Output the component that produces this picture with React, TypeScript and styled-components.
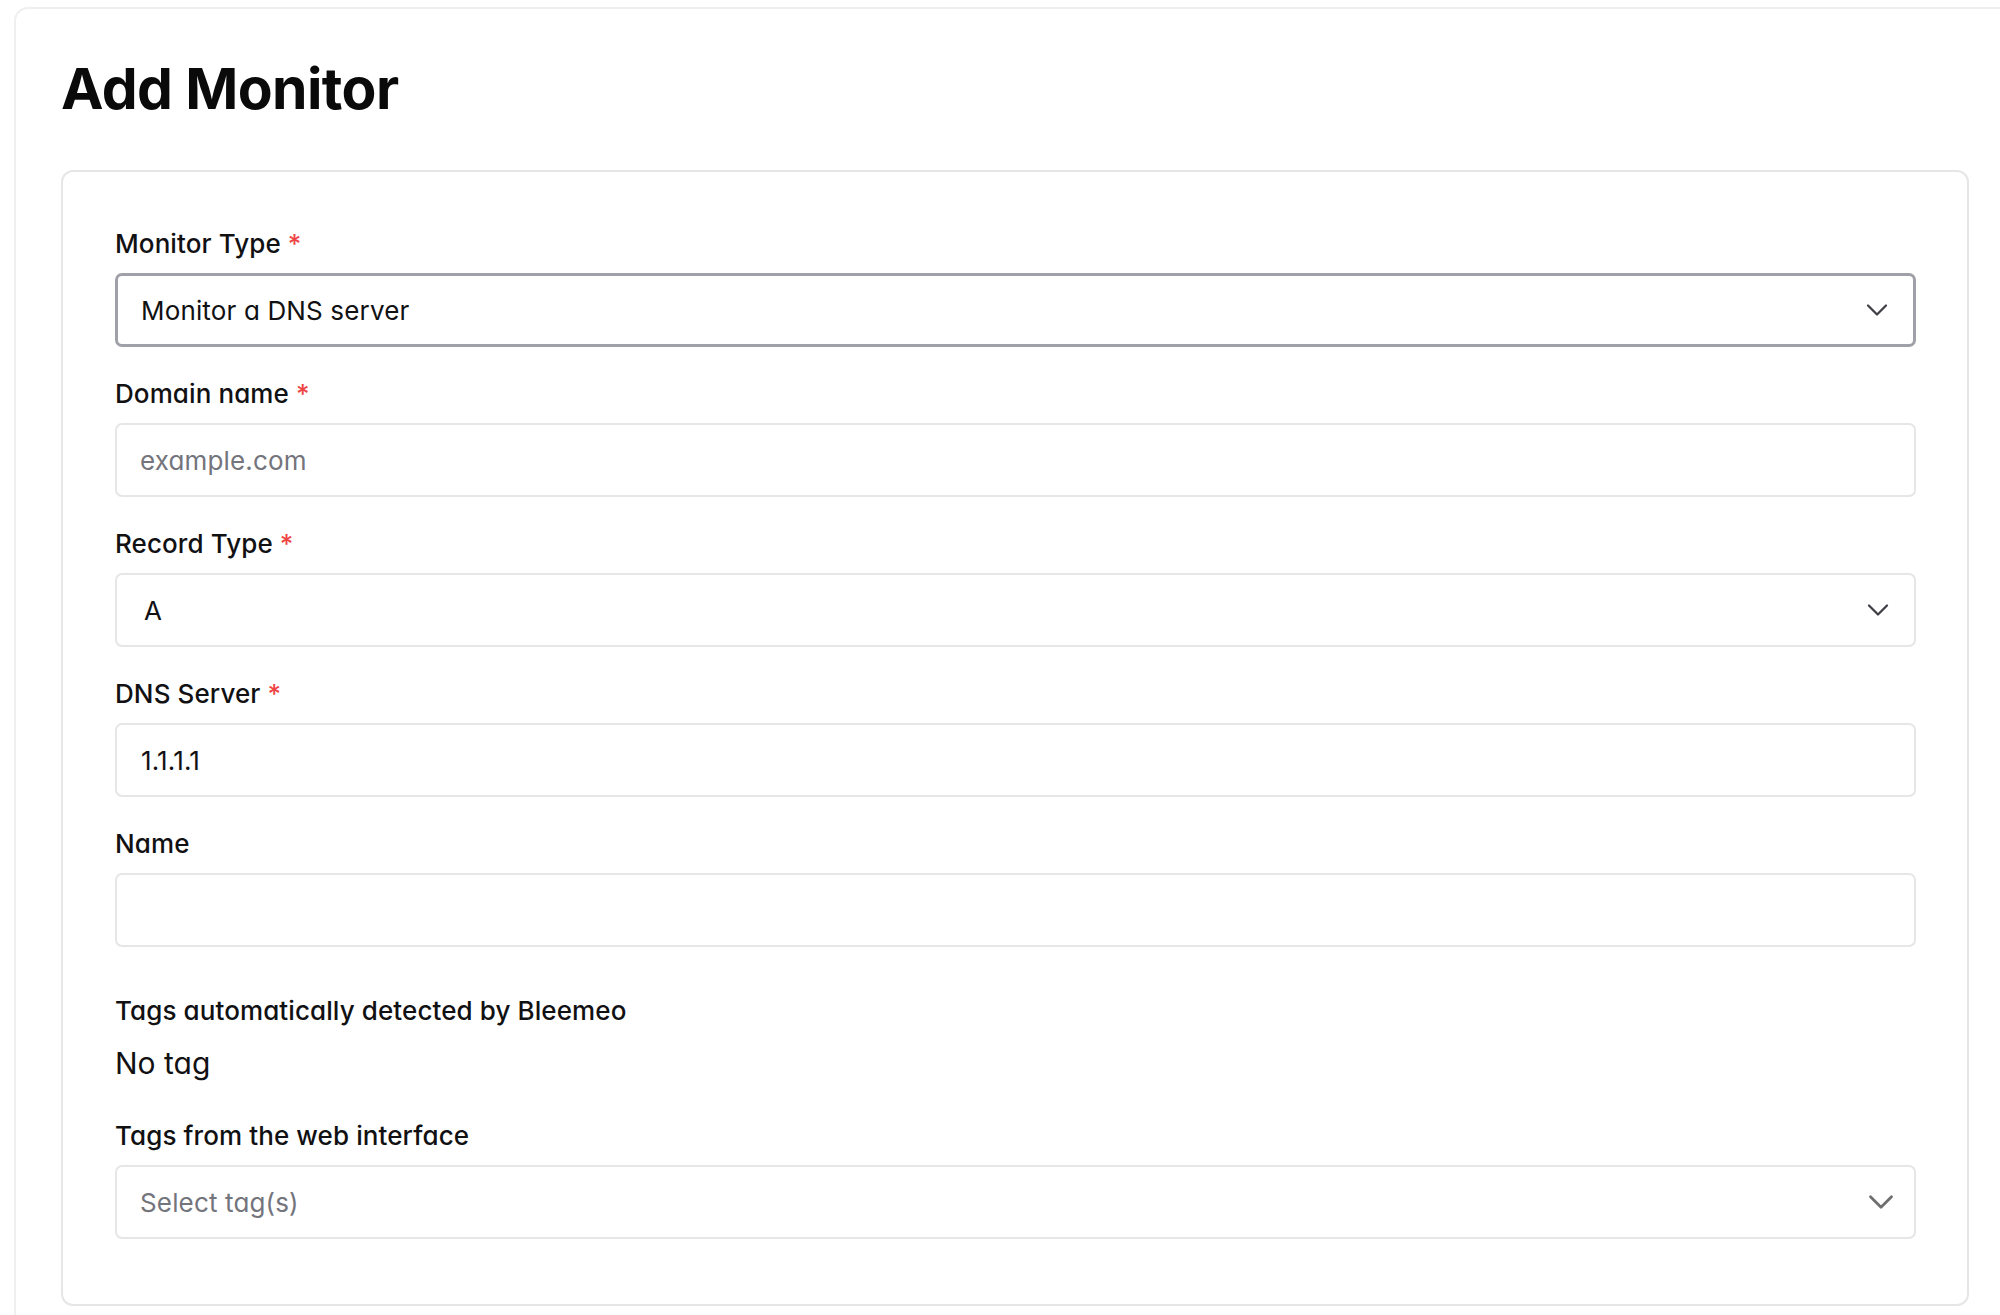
import React from "react";
import styled, { createGlobalStyle } from "styled-components";

const GlobalStyle = createGlobalStyle`
  html, body {
    margin: 0;
    padding: 0;
    background: #ffffff;
  }
  body {
    font-family: Inter, "Noto Sans", "Liberation Sans", sans-serif;
    font-feature-settings: "cv11" 1;
    color: #111113;
    overflow: hidden;
  }
`;

const Page = styled.div`
  padding: 7px 0 0 14px;
  height: 1315px;
  box-sizing: border-box;
`;

const Shell = styled.main`
  border: 2px solid #efefef;
  border-right: none;
  border-bottom: none;
  border-top-left-radius: 14px;
  padding: 30px 0 0 45px;
  height: 100%;
  box-sizing: border-box;
`;

const Title = styled.h1`
  margin: 0 0 31px;
  font-size: 57px;
  line-height: 100px;
  font-weight: 700;
  letter-spacing: -0.6px;
  color: #0a0a0a;
`;

const Card = styled.section`
  width: 1908px;
  box-sizing: border-box;
  border: 2px solid #e6e6e6;
  border-radius: 12px;
  padding: 54px 51px 65px 52px;
`;

const Field = styled.div<{ $last?: boolean }>`
  margin-bottom: ${(p) => (p.$last ? "0" : "29px")};
`;

const Label = styled.label`
  display: block;
  font-size: 26px;
  line-height: 36px;
  font-weight: 500;
  letter-spacing: 0.1px;
  color: #111113;
  margin-bottom: 11px;
`;

const Required = styled.span`
  color: #ef4444;
  margin-left: 7px;
`;

const Control = styled.div<{ $focused?: boolean; $muted?: boolean; $edge?: number }>`
  height: 74px;
  box-sizing: border-box;
  display: flex;
  align-items: center;
  justify-content: space-between;
  border: ${(p) => (p.$focused ? "3px solid #a0a0a8" : "2px solid #e6e6e6")};
  border-radius: 7px;
  padding: 0 ${(p) => p.$edge ?? 20}px 0 ${(p) => (p.$focused ? 22 : 23)}px;
  font-size: 26px;
  color: ${(p) => (p.$muted ? "#74747c" : "#111113")};
  background: #fff;
`;

const Value = styled.span<{ $shift?: number }>`
  padding-left: ${(p) => p.$shift ?? 0}px;
  letter-spacing: 0.15px;
`;

const Chevron = styled.svg<{ $light?: boolean }>`
  width: ${(p) => (p.$light ? "42px" : "36px")};
  height: ${(p) => (p.$light ? "42px" : "36px")};
  stroke: ${(p) => (p.$light ? "#6f6f6f" : "#3f3f46")};
  stroke-width: ${(p) => (p.$light ? "1.6" : "1.5")};
  fill: none;
  stroke-linecap: round;
  stroke-linejoin: round;
  flex-shrink: 0;
`;

const TagLabel = styled(Label)`
  margin-top: 46px;
  margin-bottom: 14px;
`;

const NoTag = styled.div`
  font-size: 30px;
  line-height: 40px;
  font-weight: 400;
  color: #111113;
  margin-bottom: 35px;
`;

const ChevronDown: React.FC<{ light?: boolean }> = ({ light }) => (
  <Chevron viewBox="0 0 24 24" $light={light}>
    <path d="m6 9 6 6 6-6" />
  </Chevron>
);

const App: React.FC = () => {
  return (
    <>
      <GlobalStyle />
      <Page>
        <Shell>
          <Title>Add Monitor</Title>
          <Card>
            <Field>
              <Label>
                Monitor Type<Required>*</Required>
              </Label>
              <Control $focused $edge={18}>
                <Value $shift={1}>Monitor a DNS server</Value>
                <ChevronDown />
              </Control>
            </Field>

            <Field>
              <Label>
                Domain name<Required>*</Required>
              </Label>
              <Control $muted>
                <Value>example.com</Value>
              </Control>
            </Field>

            <Field>
              <Label>
                Record Type<Required>*</Required>
              </Label>
              <Control $edge={18}>
                <Value $shift={4}>A</Value>
                <ChevronDown />
              </Control>
            </Field>

            <Field>
              <Label>
                DNS Server<Required>*</Required>
              </Label>
              <Control>
                <Value $shift={1}>1.1.1.1</Value>
              </Control>
            </Field>

            <Field>
              <Label>Name</Label>
              <Control />
            </Field>

            <TagLabel>Tags automatically detected by Bleemeo</TagLabel>
            <NoTag>No tag</NoTag>

            <Field $last>
              <Label>Tags from the web interface</Label>
              <Control $muted $edge={12}>
                <Value>Select tag(s)</Value>
                <ChevronDown light />
              </Control>
            </Field>
          </Card>
        </Shell>
      </Page>
    </>
  );
};

export default App;
